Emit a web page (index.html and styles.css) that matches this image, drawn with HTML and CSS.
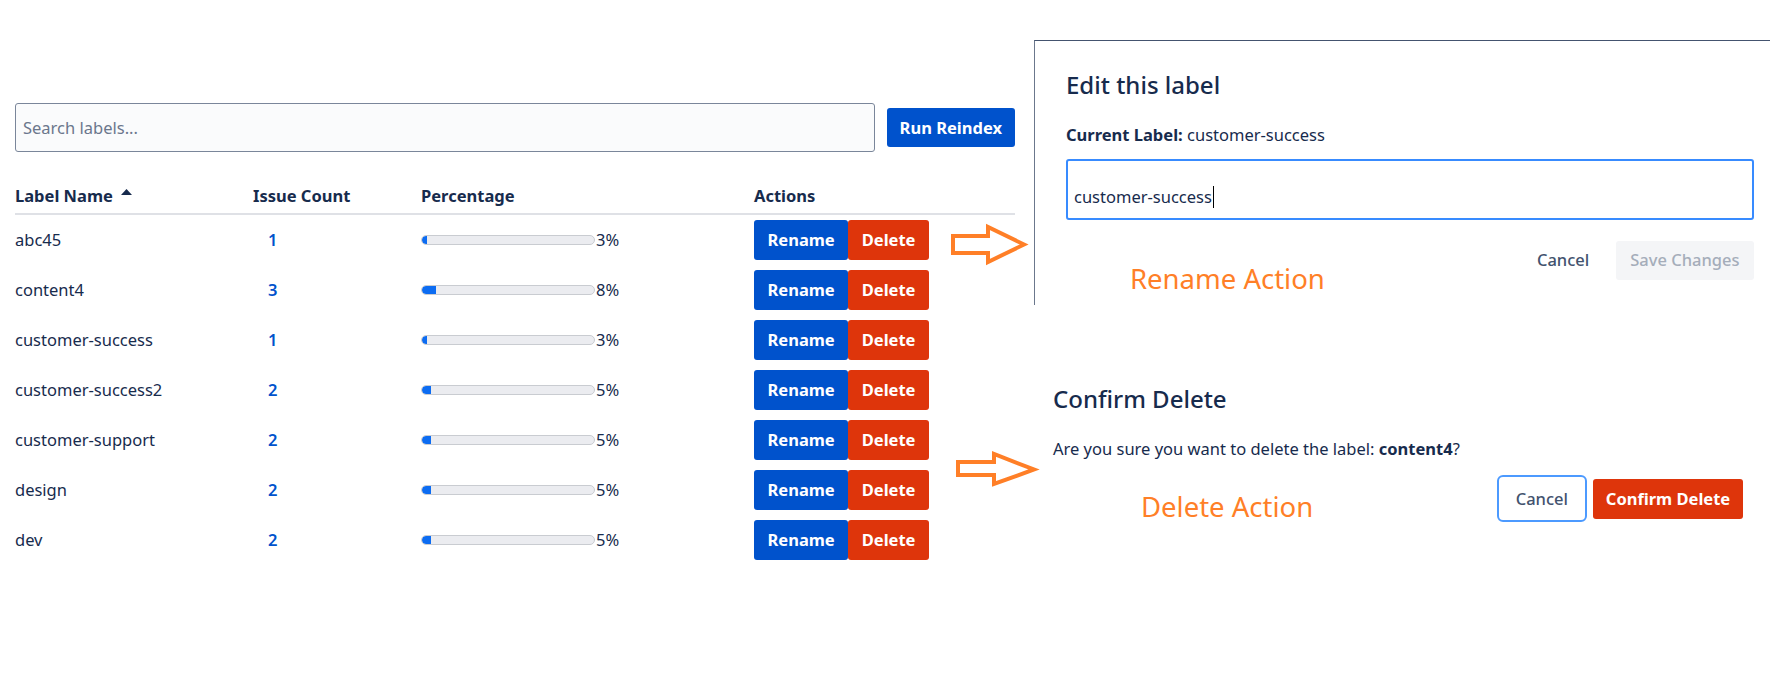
FILE: index.html
```html
<!DOCTYPE html>
<html lang="en">
<head>
<meta charset="utf-8">
<title>Label Manager</title>
<link rel="stylesheet" href="styles.css">
</head>
<body>
<div class="canvas">
  <section class="labels">
    <div class="search-row">
      <input class="search" type="text" placeholder="Search labels...">
      <button class="btn btn-primary">Run Reindex</button>
    </div>
    <table class="label-table">
      <thead>
        <tr>
          <th class="col-name">Label Name<svg class="sort" width="11" height="6" viewBox="0 0 11 6"><polygon points="0,6 5.5,0 11,6" fill="#172b4d"/></svg></th>
          <th class="col-count">Issue Count</th>
          <th class="col-pct">Percentage</th>
          <th class="col-actions">Actions</th>
        </tr>
      </thead>
      <tbody>
        <tr>
          <td>abc45</td>
          <td class="count">1</td>
          <td><div class="pct"><div class="bar"><div class="fill" style="width:3%"></div></div><span>3%</span></div></td>
          <td><div class="actions"><button class="btn btn-primary">Rename</button><button class="btn btn-danger">Delete</button></div></td>
        </tr>
        <tr>
          <td>content4</td>
          <td class="count">3</td>
          <td><div class="pct"><div class="bar"><div class="fill" style="width:8%"></div></div><span>8%</span></div></td>
          <td><div class="actions"><button class="btn btn-primary">Rename</button><button class="btn btn-danger">Delete</button></div></td>
        </tr>
        <tr>
          <td>customer-success</td>
          <td class="count">1</td>
          <td><div class="pct"><div class="bar"><div class="fill" style="width:3%"></div></div><span>3%</span></div></td>
          <td><div class="actions"><button class="btn btn-primary">Rename</button><button class="btn btn-danger">Delete</button></div></td>
        </tr>
        <tr>
          <td>customer-success2</td>
          <td class="count">2</td>
          <td><div class="pct"><div class="bar"><div class="fill" style="width:5%"></div></div><span>5%</span></div></td>
          <td><div class="actions"><button class="btn btn-primary">Rename</button><button class="btn btn-danger">Delete</button></div></td>
        </tr>
        <tr>
          <td>customer-support</td>
          <td class="count">2</td>
          <td><div class="pct"><div class="bar"><div class="fill" style="width:5%"></div></div><span>5%</span></div></td>
          <td><div class="actions"><button class="btn btn-primary">Rename</button><button class="btn btn-danger">Delete</button></div></td>
        </tr>
        <tr>
          <td>design</td>
          <td class="count">2</td>
          <td><div class="pct"><div class="bar"><div class="fill" style="width:5%"></div></div><span>5%</span></div></td>
          <td><div class="actions"><button class="btn btn-primary">Rename</button><button class="btn btn-danger">Delete</button></div></td>
        </tr>
        <tr>
          <td>dev</td>
          <td class="count">2</td>
          <td><div class="pct"><div class="bar"><div class="fill" style="width:5%"></div></div><span>5%</span></div></td>
          <td><div class="actions"><button class="btn btn-primary">Rename</button><button class="btn btn-danger">Delete</button></div></td>
        </tr>
      </tbody>
    </table>
  </section>

  <aside class="dialogs">
    <div class="edit-dialog">
      <h2 class="dialog-title">Edit this label</h2>
      <p class="current"><strong>Current Label:</strong> customer-success</p>
      <div class="text-field" role="textbox">customer-success<span class="caret"></span></div>
      <div class="dialog-footer">
        <span class="annotation rename-note">Rename Action</span>
        <div class="footer-buttons">
          <button class="btn btn-subtle">Cancel</button>
          <button class="btn btn-disabled">Save Changes</button>
        </div>
      </div>
    </div>

    <div class="delete-dialog">
      <h2 class="dialog-title">Confirm Delete</h2>
      <p class="confirm-text">Are you sure you want to delete the label: <strong>content4</strong>?</p>
      <div class="dialog-footer">
        <span class="annotation delete-note">Delete Action</span>
        <div class="footer-buttons tight">
          <button class="btn btn-outline">Cancel</button>
          <button class="btn btn-danger">Confirm Delete</button>
        </div>
      </div>
    </div>
  </aside>

  <svg class="arrow arrow-rename" width="82" height="46" viewBox="0 0 82 46">
    <polygon points="5,14 40,14 40,5 76,22.5 40,40 40,31 5,31" fill="#ffffff" stroke="#ff7f27" stroke-width="4"/>
  </svg>
  <svg class="arrow arrow-delete" width="88" height="42" viewBox="0 0 88 42">
    <polygon points="6,13 42,13 42,5 82,20.5 42,35 42,26 6,26" fill="#ffffff" stroke="#ff7f27" stroke-width="4"/>
  </svg>
</div>
</body>
</html>
```

FILE: styles.css
```css
* { box-sizing: border-box; }

html, body {
  margin: 0;
  padding: 0;
  background: #ffffff;
}

body {
  font-family: "Noto Sans", "Open Sans", sans-serif;
  font-size: 16.5px;
  line-height: 24px;
  color: #172b4d;
}

.canvas {
  position: relative;
  display: flex;
  align-items: flex-start;
  width: 1770px;
  height: 689px;
  overflow: hidden;
}

/* ---------- left: label table ---------- */
.labels {
  width: 1000px;
  margin-left: 15px;
  padding-top: 103px;
  flex: none;
}

.search-row {
  display: flex;
  align-items: center;
  gap: 12px;
}

.search {
  flex: 1;
  height: 49px;
  border: 1px solid #7a869a;
  border-radius: 3px;
  background: #fafbfc;
  padding: 0 7px;
  font: inherit;
  color: #172b4d;
}

.search::placeholder {
  color: #6b778c;
}

.btn {
  font-family: inherit;
  font-size: 16.5px;
  font-weight: 700;
  line-height: 24px;
  border: none;
  border-radius: 3px;
  height: 40px;
  padding: 0 13.5px;
  cursor: pointer;
  white-space: nowrap;
}

.search-row .btn {
  height: 39px;
  padding: 0 13px;
}

.btn-primary {
  background: #0052cc;
  color: #ffffff;
}

.btn-danger {
  background: #de350b;
  color: #ffffff;
}

.label-table {
  width: 1000px;
  margin-top: 24px;
  border-collapse: collapse;
  table-layout: fixed;
}

.label-table th {
  text-align: left;
  font-weight: 700;
  padding: 8px 0 5px;
  border-bottom: 2px solid #dfe1e6;
  white-space: nowrap;
}

.col-name { width: 238px; }
.col-count { width: 168px; }
.col-pct { width: 333px; }
.col-actions { width: 261px; }

.sort {
  margin-left: 8px;
  vertical-align: 7px;
}

.label-table td {
  padding: 5px 0;
  height: 50px;
  vertical-align: middle;
}

.label-table td.count {
  padding-left: 15px;
  color: #0052cc;
  font-weight: 600;
}

.pct {
  display: flex;
  align-items: center;
  gap: 1px;
}

.bar {
  width: 174px;
  height: 10px;
  border: 1px solid #c9ccd1;
  border-radius: 5px;
  background: #ebecf0;
  overflow: hidden;
}

.fill {
  height: 100%;
  background: #0c6cf2;
  border-radius: 4px 0 0 4px;
}

.actions {
  display: flex;
}

/* ---------- right: dialogs ---------- */
.dialogs {
  flex: 1;
  margin-left: 19px;
  min-width: 0;
}

.edit-dialog {
  margin-top: 40px;
  height: 265px;
  border-top: 1px solid #44546f;
  border-left: 1px solid #6b778c;
  padding: 30px 16px 0 31px;
}

.dialog-title {
  margin: 0;
  font-size: 24px;
  line-height: 28.8px;
  font-weight: 500;
  color: #172b4d;
}

.current {
  margin: 23px 0 0;
}

.current strong {
  font-weight: 700;
}

.text-field {
  margin-top: 12px;
  height: 61px;
  border: 2px solid #388bff;
  border-radius: 3px;
  padding: 15px 6px 0;
  display: flex;
  align-items: center;
  line-height: 42px;
  color: #172b4d;
}

.caret {
  display: inline-block;
  width: 1px;
  height: 22px;
  background: #000000;
  margin-left: 1px;
}

.dialog-footer {
  display: flex;
  justify-content: space-between;
  align-items: flex-start;
}

.edit-dialog .dialog-footer {
  margin-top: 21px;
}

.annotation {
  font-size: 27.5px;
  line-height: 33px;
  color: #ff7f27;
}

.rename-note {
  margin-left: 64px;
  margin-top: 21px;
}

.footer-buttons {
  display: flex;
  align-items: center;
  gap: 12px;
}

.footer-buttons.tight {
  gap: 6px;
}

.btn-subtle {
  background: transparent;
  color: #42526e;
  font-weight: 500;
  height: 39px;
  padding: 0 14.5px;
}

.btn-disabled {
  background: #f4f5f7;
  color: #a5adba;
  font-weight: 500;
  height: 39px;
  padding: 0 14.5px;
}

.delete-dialog {
  margin-top: 80px;
  margin-left: 19px;
  width: 690px;
}

.confirm-text {
  margin: 23px 0 0;
}

.confirm-text strong {
  font-weight: 700;
}

.delete-dialog .dialog-footer {
  margin-top: 13.5px;
  align-items: center;
}

.delete-note {
  margin-left: 88px;
  align-self: flex-start;
  margin-top: 15.5px;
}

.btn-outline {
  background: #ffffff;
  color: #42526e;
  font-weight: 500;
  height: 47px;
  border: 2px solid #4c9aff;
  border-radius: 6px;
  padding: 0 17px;
}

.delete-dialog .btn-danger {
  padding: 0 12px;
  width: 150px;
}

/* annotation arrows drawn over the canvas */
.arrow {
  position: absolute;
}

.arrow-rename {
  left: 948px;
  top: 222px;
}

.arrow-delete {
  left: 952px;
  top: 449px;
}
```
